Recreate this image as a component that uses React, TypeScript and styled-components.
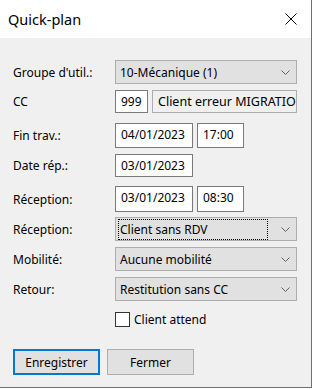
import styled, { createGlobalStyle } from "styled-components";

const GlobalStyle = createGlobalStyle`
  html, body {
    margin: 0;
    padding: 0;
    background: #ffffff;
  }
  body {
    font-family: "Noto Sans", "Liberation Sans", sans-serif;
    font-size: 12px;
    color: #000;
  }
`;

const Window = styled.div`
  width: 312px;
  height: 388px;
  box-sizing: border-box;
  border-right: 1px solid #6f6f6f;
  border-bottom: 1px solid #6f6f6f;
  background: #f0f0f0;
  display: flex;
  flex-direction: column;
`;

const TitleBar = styled.div`
  height: 38px;
  background: #ffffff;
  display: flex;
  align-items: center;
  justify-content: space-between;
  padding: 0 14px 0 8px;
`;

const Title = styled.span`
  font-size: 14.5px;
  color: #000;
`;

const CloseBtn = styled.svg`
  width: 12px;
  height: 12px;
`;

const Body = styled.div`
  flex: 1;
  padding: 0 14px 0 13px;
  display: flex;
  flex-direction: column;
`;

const Row = styled.div<{ $top: number; $h: number }>`
  display: grid;
  grid-template-columns: 102px 1fr;
  align-items: center;
  margin-top: ${(p) => p.$top}px;
  height: ${(p) => p.$h}px;
`;

const Label = styled.span`
  white-space: nowrap;
`;

const Fields = styled.div`
  display: flex;
  gap: 4px;
  height: 100%;
  min-width: 0;
`;

const TextBox = styled.div<{ $w?: number; $ro?: boolean }>`
  box-sizing: border-box;
  width: ${(p) => (p.$w ? `${p.$w}px` : "auto")};
  flex: ${(p) => (p.$w ? "none" : "1")};
  min-width: 0;
  height: 100%;
  border: 1px solid ${(p) => (p.$ro ? "#adadad" : "#7a7a7a")};
  background: ${(p) => (p.$ro ? "#f0f0f0" : "#ffffff")};
  padding: 2px 4px 0 5px;
  overflow: hidden;
  white-space: nowrap;
  font-size: ${(p) => (p.$ro ? "12.5px" : "12px")};
`;

const Combo = styled.div`
  box-sizing: border-box;
  width: 100%;
  height: 100%;
  border: 1px solid #adadad;
  background: #e1e1e1;
  display: flex;
  align-items: center;
  padding: 0 6px 0 3px;
`;

const ComboText = styled.span<{ $focus?: boolean }>`
  flex: 1;
  padding: 1px 1px;
  outline: ${(p) => (p.$focus ? "1px dotted #000" : "none")};
  margin-right: ${(p) => (p.$focus ? "14px" : "0")};
`;

const Chevron = styled.svg`
  width: 9px;
  height: 5px;
  margin-left: auto;
`;

const CheckRow = styled.label`
  display: flex;
  align-items: center;
  gap: 4px;
  margin: 10px 0 0 102px;
`;

const CheckBox = styled.span`
  box-sizing: border-box;
  width: 15px;
  height: 15px;
  border: 1px solid #333;
  background: #fff;
`;

const Buttons = styled.div`
  display: flex;
  gap: 7px;
  margin-top: 21px;
`;

const Button = styled.button<{ $default?: boolean }>`
  box-sizing: border-box;
  width: 87px;
  height: 26px;
  font-family: inherit;
  font-size: 12px;
  color: #000;
  background: #e1e1e1;
  border: ${(p) => (p.$default ? "2px solid #0078d7" : "1px solid #adadad")};
  padding: 0;
`;

function ChevronIcon() {
  return (
    <Chevron viewBox="0 0 9 5">
      <polyline points="0.5,0.5 4.5,4.5 8.5,0.5" fill="none" stroke="#606060" strokeWidth="1" />
    </Chevron>
  );
}

function Select({ value, focus }: { value: string; focus?: boolean }) {
  return (
    <Combo>
      <ComboText $focus={focus}>{value}</ComboText>
      <ChevronIcon />
    </Combo>
  );
}

export default function App() {
  return (
    <>
      <GlobalStyle />
      <Window>
        <TitleBar>
          <Title>Quick-plan</Title>
          <CloseBtn viewBox="0 0 12 12">
            <path d="M0.5 0.5 L11.5 11.5 M11.5 0.5 L0.5 11.5" stroke="#000" strokeWidth="1" />
          </CloseBtn>
        </TitleBar>
        <Body>
          <Row $top={22} $h={24}>
            <Label>Groupe d'util.:</Label>
            <Select value="10-Mécanique (1)" />
          </Row>
          <Row $top={6} $h={23}>
            <Label>CC</Label>
            <Fields>
              <TextBox $w={33}>999</TextBox>
              <TextBox $ro>Client erreur MIGRATION</TextBox>
            </Fields>
          </Row>
          <Row $top={10} $h={25}>
            <Label>Fin trav.:</Label>
            <Fields>
              <TextBox $w={78}>04/01/2023</TextBox>
              <TextBox $w={47}>17:00</TextBox>
            </Fields>
          </Row>
          <Row $top={6} $h={23}>
            <Label>Date rép.:</Label>
            <Fields>
              <TextBox $w={78}>03/01/2023</TextBox>
            </Fields>
          </Row>
          <Row $top={9} $h={26}>
            <Label>Réception:</Label>
            <Fields>
              <TextBox $w={78}>03/01/2023</TextBox>
              <TextBox $w={47}>08:30</TextBox>
            </Fields>
          </Row>
          <Row $top={5} $h={24}>
            <Label>Réception:</Label>
            <Select value="Client sans RDV" focus />
          </Row>
          <Row $top={6} $h={24}>
            <Label>Mobilité:</Label>
            <Select value="Aucune mobilité" />
          </Row>
          <Row $top={6} $h={24}>
            <Label>Retour:</Label>
            <Select value="Restitution sans CC" />
          </Row>
          <CheckRow>
            <CheckBox />
            Client attend
          </CheckRow>
          <Buttons>
            <Button $default>Enregistrer</Button>
            <Button>Fermer</Button>
          </Buttons>
        </Body>
      </Window>
    </>
  );
}
